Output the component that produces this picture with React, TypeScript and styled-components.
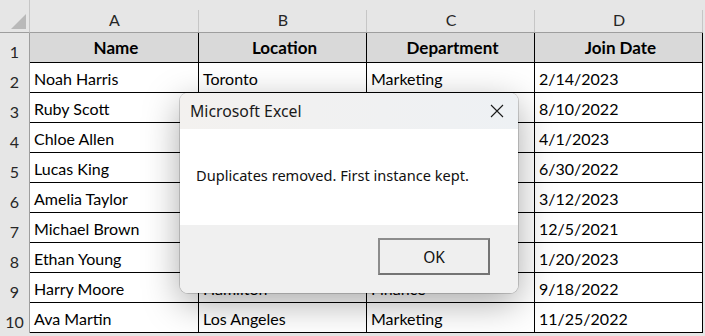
import React from "react";
import styled, { createGlobalStyle } from "styled-components";

const Global = createGlobalStyle`
  html, body { margin: 0; padding: 0; background: #ffffff; }
  body { width: 705px; height: 336px; overflow: hidden; }
`;

const Page = styled.div`
  position: relative;
  width: 705px;
  height: 336px;
  background: #e6e6e6;
  font-family: Lato, "Liberation Sans", sans-serif;
`;

const Sheet = styled.div`
  display: grid;
  grid-template-columns: 30px 169px 168px 168px 168px;
  grid-template-rows: 33px repeat(10, 30px);
  width: 703px;
  background: #ffffff;
`;

const Corner = styled.div`
  position: relative;
  background: #e6e6e6;
  border-bottom: 1px solid #9e9e9e;
  border-right: 1px solid #c6c6c6;
  box-sizing: border-box;
  display: flex;
  align-items: flex-end;
  justify-content: flex-end;
  padding: 0 3px 3px 0;
`;

const Triangle = styled.div`
  width: 0;
  height: 0;
  border-left: 15px solid transparent;
  border-bottom: 15px solid #b9b9b9;
`;

const ColHead = styled.div`
  background: #e6e6e6;
  border-bottom: 1px solid #9e9e9e;
  box-sizing: border-box;
  display: flex;
  align-items: flex-end;
  justify-content: center;
  padding-bottom: 3px;
  font-size: 16px;
  color: #262626;
  position: relative;
  &::after {
    content: "";
    position: absolute;
    right: 0;
    top: 10px;
    bottom: 0;
    width: 1px;
    background: #c6c6c6;
  }
`;

const RowHead = styled.div`
  background: #e6e6e6;
  border-right: 1px solid #9e9e9e;
  box-sizing: border-box;
  display: flex;
  align-items: flex-end;
  justify-content: center;
  padding-bottom: 2px;
  font-size: 16px;
  color: #262626;
`;

const Cell = styled.div<{ $head?: boolean }>`
  box-sizing: border-box;
  border-right: 1px solid #000;
  border-bottom: 1px solid #000;
  background: ${(p) => (p.$head ? "#d9d9d9" : "#ffffff")};
  display: flex;
  align-items: flex-end;
  justify-content: ${(p) => (p.$head ? "center" : "flex-start")};
  padding: 0 0 4px 4px;
  font-size: ${(p) => (p.$head ? "17px" : "16px")};
  font-weight: ${(p) => (p.$head ? 700 : 400)};
  color: #000;
  white-space: nowrap;
  overflow: hidden;
`;

const Dialog = styled.div`
  position: absolute;
  left: 180px;
  top: 93px;
  width: 338px;
  height: 200px;
  border-radius: 8px;
  overflow: hidden;
  display: flex;
  flex-direction: column;
  box-shadow: 0 0 0 1px rgba(0, 0, 0, 0.16), 0 10px 36px rgba(0, 0, 0, 0.34);
  font-family: "Noto Sans", "Open Sans", sans-serif;
`;

const TitleBar = styled.div`
  height: 36px;
  flex: none;
  display: flex;
  align-items: center;
  justify-content: space-between;
  padding: 0 10px 0 10px;
  background: linear-gradient(90deg, #f3f1ef, #eef1f4);
  font-size: 15.8px;
  color: #1a1a1a;
`;

const CloseIcon = styled.svg`
  width: 14px;
  height: 14px;
  margin-right: 4px;
`;

const Body = styled.div`
  flex: 1;
  background: #ffffff;
  display: flex;
  align-items: center;
  padding: 0 0 4px 16px;
  font-size: 14.6px;
  color: #111;
`;

const Footer = styled.div`
  height: 68px;
  flex: none;
  background: #f0f0f0;
  display: flex;
  justify-content: flex-end;
  align-items: flex-start;
  padding: 13px 28px 0 0;
  box-sizing: border-box;
`;

const OkButton = styled.button`
  width: 112px;
  height: 37px;
  box-sizing: border-box;
  background: #efefef;
  border: 2px solid #747474;
  border-top-color: #8c8c8c;
  border-left-color: #8c8c8c;
  font-family: "Noto Sans", "Open Sans", sans-serif;
  font-size: 15.5px;
  color: #111;
  padding: 0;
`;

const rows: [string, string, string, string][] = [
  ["Noah Harris", "Toronto", "Marketing", "2/14/2023"],
  ["Ruby Scott", "", "", "8/10/2022"],
  ["Chloe Allen", "", "", "4/1/2023"],
  ["Lucas King", "", "", "6/30/2022"],
  ["Amelia Taylor", "", "", "3/12/2023"],
  ["Michael Brown", "", "", "12/5/2021"],
  ["Ethan Young", "", "", "1/20/2023"],
  ["Harry Moore", "Hamilton", "Finance", "9/18/2022"],
  ["Ava Martin", "Los Angeles", "Marketing", "11/25/2022"],
];

export default function App() {
  return (
    <>
      <Global />
      <Page>
        <Sheet>
          <Corner>
            <Triangle />
          </Corner>
          {["A", "B", "C", "D"].map((c) => (
            <ColHead key={c}>{c}</ColHead>
          ))}
          <RowHead>1</RowHead>
          {["Name", "Location", "Department", "Join Date"].map((h) => (
            <Cell key={h} $head>
              {h}
            </Cell>
          ))}
          {rows.map((r, i) => (
            <React.Fragment key={i}>
              <RowHead>{i + 2}</RowHead>
              {r.map((v, j) => (
                <Cell key={j}>{v}</Cell>
              ))}
            </React.Fragment>
          ))}
        </Sheet>
        <Dialog>
          <TitleBar>
            <span>Microsoft Excel</span>
            <CloseIcon viewBox="0 0 14 14">
              <path d="M1 1 L13 13 M13 1 L1 13" stroke="#1a1a1a" strokeWidth="1.1" fill="none" />
            </CloseIcon>
          </TitleBar>
          <Body>Duplicates removed. First instance kept.</Body>
          <Footer>
            <OkButton>OK</OkButton>
          </Footer>
        </Dialog>
      </Page>
    </>
  );
}
